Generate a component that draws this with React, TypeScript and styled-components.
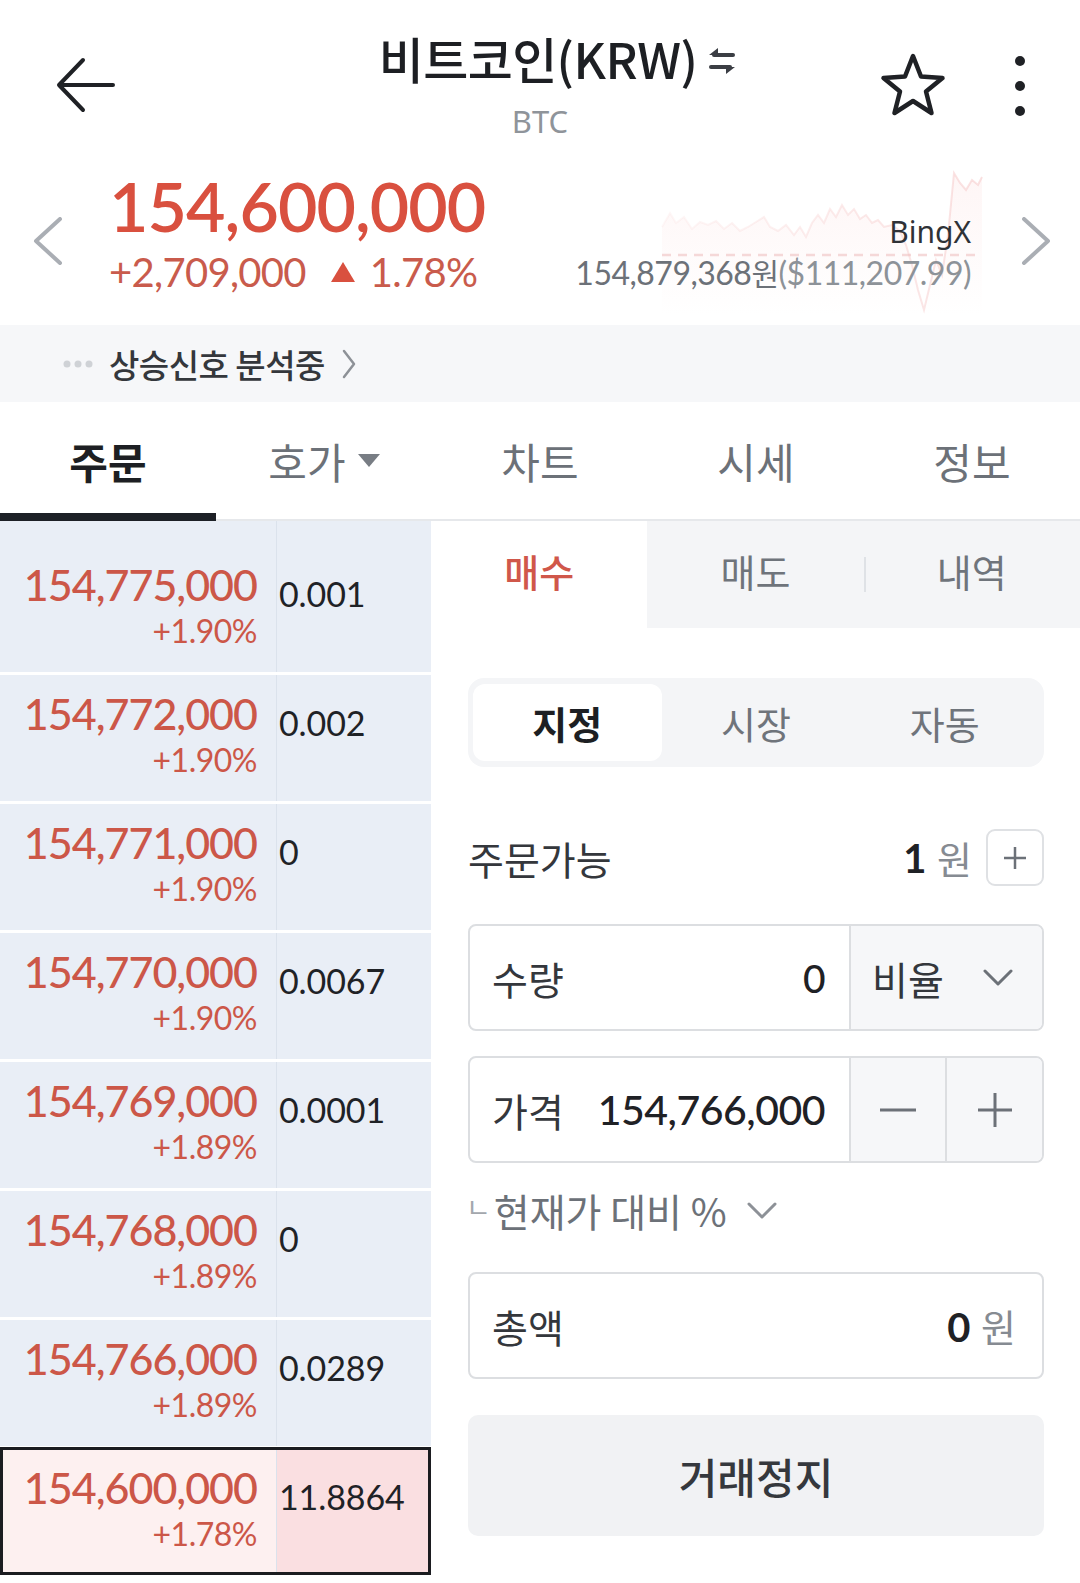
import React from 'react';
import styled, { createGlobalStyle } from 'styled-components';

const Global = createGlobalStyle`
  html, body { margin: 0; padding: 0; background: #fff; }
  body { font-family: "Noto Sans CJK KR", "Noto Sans", sans-serif; }
  * { box-sizing: border-box; }
`;

const NUM = `"Lato", "Noto Sans CJK KR", sans-serif`;
const KR = `"Noto Sans CJK KR", "Noto Sans", sans-serif`;

const Page = styled.div`
  width: 1080px;
  height: 1583px;
  overflow: hidden;
  background: #fff;
`;

/* ---------- header ---------- */
const Header = styled.header`
  height: 160px;
  display: grid;
  grid-template-columns: 1fr auto 1fr;
`;
const HeaderLeft = styled.div`
  padding: 57px 0 0 55px;
`;
const TitleBlock = styled.div`
  display: flex;
  flex-direction: column;
  align-items: center;
  padding-top: 27px;
`;
const TitleRow = styled.div`
  display: flex;
  align-items: center;
  gap: 10px;
  margin-left: 36px;
`;
const Title = styled.h1`
  margin: 0;
  font-family: ${KR};
  font-size: 49px;
  line-height: 62px;
  font-weight: 500;
  color: #1d1f23;
  letter-spacing: -0.6px;
`;
const Ticker = styled.div`
  font-family: "Noto Sans", sans-serif;
  font-size: 31px;
  line-height: 36px;
  color: #8f949a;
  margin-top: 14px;
`;
const HeaderRight = styled.div`
  display: flex;
  justify-content: flex-end;
  align-items: flex-start;
  padding: 52px 55px 0 0;
  gap: 68px;
`;
const Kebab = styled.div`
  display: flex;
  flex-direction: column;
  gap: 15px;
  margin-top: 4px;
  & > span {
    width: 10px;
    height: 10px;
    border-radius: 50%;
    background: #1f2125;
  }
`;

/* ---------- price ---------- */
const PriceSection = styled.section`
  position: relative;
  height: 165px;
  display: flex;
  align-items: flex-start;
`;
const NavBtn = styled.div<{ $pad: number }>`
  width: 109px;
  align-self: center;
  display: flex;
  padding-left: ${(p) => p.$pad}px;
  margin-top: -4px;
`;
const PriceBlock = styled.div`
  padding-top: 12px;
  position: relative;
  z-index: 1;
`;
const BigPrice = styled.div`
  font-family: ${NUM};
  font-size: 68px;
  line-height: 68px;
  font-weight: 600;
  letter-spacing: -0.9px;
  color: #d9503f;
`;
const ChangeLine = styled.div`
  margin-top: 12px;
  display: flex;
  align-items: center;
  font-family: ${NUM};
  font-size: 40px;
  line-height: 40px;
  letter-spacing: -0.7px;
  color: #c95b4c;
  & svg { margin: 0 14px 0 24px; }
`;
const RefBlock = styled.div`
  margin-left: auto;
  padding-top: 54px;
  text-align: right;
  position: relative;
  z-index: 1;
`;
const Exchange = styled.div`
  font-family: "Noto Sans", sans-serif;
  font-size: 30px;
  line-height: 36px;
  color: #2f3237;
`;
const RefPrice = styled.div`
  margin-top: 4px;
  font-family: ${NUM};
  font-size: 32px;
  line-height: 36px;
  letter-spacing: -0.5px;
  color: #6c7178;
  & span { color: #8d9298; }
  & i { font-style: normal; font-family: ${KR}; font-size: 30px; }
`;
const Spark = styled.svg`
  position: absolute;
  left: 658px;
  top: 5px;
  pointer-events: none;
`;

/* ---------- signal bar ---------- */
const SignalBar = styled.div`
  height: 77px;
  background: #f6f7f9;
  display: flex;
  align-items: center;
  padding-left: 63px;
`;
const SignalText = styled.span`
  font-family: ${KR};
  font-size: 33px;
  font-weight: 500;
  color: #34373c;
  margin: 0 16px 0 16px;
  letter-spacing: -0.5px;
`;

/* ---------- tabs ---------- */
const TabBar = styled.nav`
  height: 119px;
  display: grid;
  grid-template-columns: repeat(5, 1fr);
  border-bottom: 2px solid #e6e8eb;
`;
const Tab = styled.div<{ $active?: boolean }>`
  position: relative;
  display: flex;
  align-items: center;
  justify-content: center;
  gap: 12px;
  font-family: ${KR};
  font-size: 42px;
  font-weight: ${(p) => (p.$active ? 700 : 400)};
  color: ${(p) => (p.$active ? '#1d1f23' : '#6c7178')};
  &::after {
    content: '';
    display: ${(p) => (p.$active ? 'block' : 'none')};
    position: absolute;
    left: 0;
    right: 0;
    bottom: -2px;
    height: 8px;
    background: #1d2026;
  }
`;

/* ---------- main ---------- */
const Main = styled.div`
  display: grid;
  grid-template-columns: 431px 1fr;
  align-items: start;
`;
const Book = styled.div`
  display: flex;
  flex-direction: column;
  gap: 3px;
  background: #fff;
`;
const BookRow = styled.div<{ $h?: number; $hl?: boolean }>`
  position: relative;
  height: ${(p) => p.$h ?? 126}px;
  display: grid;
  grid-template-columns: 276px 1fr;
  ${(p) =>
    p.$hl
      ? `&::after { content: ''; position: absolute; inset: -2px 0 0 0; border: 3px solid #1b1c20; pointer-events: none; }`
      : ''}
`;
const PriceCell = styled.div<{ $hl?: boolean }>`
  background: ${(p) => (p.$hl ? '#fdf0f0' : '#e9eef6')};
  text-align: right;
  padding: 17px 19px 0 0;
`;
const QtyCell = styled.div<{ $hl?: boolean }>`
  background: ${(p) => (p.$hl ? '#fadfe1' : '#e9eef6')};
  border-left: 1px solid #dbe2ec;
  padding: 31px 0 0 2px;
  font-family: ${NUM};
  font-size: 34px;
  line-height: 34px;
  letter-spacing: -0.1px;
  color: #1f2226;
`;
const BookPrice = styled.div`
  font-family: ${NUM};
  font-size: 43px;
  line-height: 43px;
  font-weight: 500;
  letter-spacing: -1px;
  color: #cc5748;
`;
const BookPct = styled.div`
  margin-top: 9px;
  font-family: ${NUM};
  font-size: 32px;
  line-height: 32px;
  letter-spacing: -0.5px;
  color: #cc5748;
`;

/* ---------- order panel ---------- */
const Panel = styled.div`
  display: flex;
  flex-direction: column;
`;
const SideTabs = styled.div`
  height: 107px;
  display: grid;
  grid-template-columns: repeat(3, 1fr);
  background: #f4f5f7;
`;
const SideTab = styled.div<{ $active?: boolean; $sep?: boolean }>`
  position: relative;
  display: flex;
  align-items: center;
  justify-content: center;
  font-family: ${KR};
  font-size: 38px;
  font-weight: ${(p) => (p.$active ? 500 : 400)};
  color: ${(p) => (p.$active ? '#d0574a' : '#6f747b')};
  background: ${(p) => (p.$active ? '#fff' : 'transparent')};
  padding-bottom: 8px;
  &::before {
    content: '';
    display: ${(p) => (p.$sep ? 'block' : 'none')};
    position: absolute;
    left: 0;
    top: 36px;
    width: 2px;
    height: 35px;
    background: #dfe2e6;
  }
`;
const Form = styled.div`
  padding: 0 36px 0 37px;
  display: flex;
  flex-direction: column;
`;
const Segment = styled.div`
  margin-top: 50px;
  height: 89px;
  background: #f4f5f7;
  border-radius: 16px;
  padding: 6px 5px;
  display: grid;
  grid-template-columns: repeat(3, 1fr);
`;
const SegItem = styled.div<{ $active?: boolean }>`
  display: flex;
  align-items: center;
  justify-content: center;
  border-radius: 12px;
  background: ${(p) => (p.$active ? '#fff' : 'transparent')};
  font-family: ${KR};
  font-size: 38px;
  font-weight: ${(p) => (p.$active ? 700 : 400)};
  color: ${(p) => (p.$active ? '#1d1f23' : '#6f747b')};
`;
const AvailRow = styled.div`
  margin-top: 62px;
  height: 57px;
  display: flex;
  align-items: center;
`;
const Spacer = styled.span`
  flex: 1;
`;
const Label = styled.span<{ $color?: string }>`
  font-family: ${KR};
  font-size: 39px;
  color: ${(p) => p.$color ?? '#34373c'};
  white-space: nowrap;
`;
const Amount = styled.span<{ $bold?: boolean; $size?: number }>`
  font-family: ${NUM};
  font-size: ${(p) => p.$size ?? 39}px;
  font-weight: ${(p) => (p.$bold ? 700 : 500)};
  color: #1f2125;
  letter-spacing: -0.5px;
`;
const Won = styled.span`
  font-family: ${KR};
  font-size: 38px;
  color: #868b92;
  margin-left: 11px;
`;
const PlusBox = styled.div`
  margin-left: 14px;
  width: 58px;
  height: 57px;
  border: 2px solid #dfe1e4;
  border-radius: 9px;
  display: flex;
  align-items: center;
  justify-content: center;
`;
const InputBox = styled.div<{ $mt: number }>`
  margin-top: ${(p) => p.$mt}px;
  height: 107px;
  border: 2px solid #dcdee1;
  border-radius: 8px;
  display: flex;
  overflow: hidden;
`;
const Field = styled.div<{ $pr?: number }>`
  flex: 1;
  display: flex;
  align-items: center;
  justify-content: space-between;
  padding: 0 ${(p) => p.$pr ?? 24}px 0 22px;
`;
const SideBox = styled.div<{ $w: number }>`
  width: ${(p) => p.$w}px;
  background: #f6f7f9;
  border-left: 2px solid #dcdee1;
  display: flex;
  align-items: center;
  justify-content: center;
`;
const RatioBox = styled(SideBox)`
  justify-content: space-between;
  padding: 0 29px 0 21px;
`;
const CompareRow = styled.div`
  margin-top: 16px;
  height: 62px;
  display: flex;
  align-items: center;
  gap: 0;
  & > svg { margin-left: 20px; }
`;
const Corner = styled.span`
  font-family: ${KR};
  font-size: 27px;
  color: #a3a7ad;
  margin: -8px 3px 0 -2px;
`;
const HaltButton = styled.div`
  margin-top: 36px;
  height: 121px;
  border-radius: 10px;
  background: #f1f2f4;
  display: flex;
  align-items: center;
  justify-content: center;
  font-family: ${KR};
  font-size: 42px;
  font-weight: 500;
  color: #35383d;
`;

/* ---------- icons ---------- */
const BackIcon = () => (
  <svg width="60" height="56" viewBox="0 0 60 56" fill="none">
    <path d="M58 28H4M28 3L4 28L28 53" stroke="#1f2125" strokeWidth="4" strokeLinecap="round" strokeLinejoin="round" />
  </svg>
);
const SwapIcon = () => (
  <svg width="30" height="32" viewBox="0 0 30 32" fill="none" style={{ marginTop: 6 }}>
    <path d="M26 10H7" stroke="#3b3e44" strokeWidth="4" strokeLinecap="round" />
    <path d="M2 10L11 3V10Z" fill="#3b3e44" />
    <path d="M4 22H23" stroke="#3b3e44" strokeWidth="4" strokeLinecap="round" />
    <path d="M28 22L19 29V22Z" fill="#3b3e44" />
  </svg>
);
const StarIcon = () => (
  <svg width="68" height="66" viewBox="0 0 68 66" fill="none">
    <path
      d="M34 4L42 24.5L63.5 26L47 39.5L52.5 61L34 49L15.5 61L21 39.5L4.5 26L26 24.5Z"
      stroke="#1f2125"
      strokeWidth="4.5"
      strokeLinejoin="round"
    />
  </svg>
);
const Chevron = ({ dir, color = '#aaaeb4', w = 30, h = 48, sw = 4 }: { dir: 'l' | 'r'; color?: string; w?: number; h?: number; sw?: number }) => (
  <svg width={w} height={h} viewBox={`0 0 ${w} ${h}`} fill="none">
    <path
      d={dir === 'l' ? `M${w - 3} 2L3 ${h / 2}L${w - 3} ${h - 2}` : `M3 2L${w - 3} ${h / 2}L3 ${h - 2}`}
      stroke={color}
      strokeWidth={sw}
      strokeLinecap="round"
      strokeLinejoin="round"
    />
  </svg>
);
const DownChevron = ({ w = 30, h = 17, color = '#6c7178', sw = 3 }: { w?: number; h?: number; color?: string; sw?: number }) => (
  <svg width={w} height={h} viewBox={`0 0 ${w} ${h}`} fill="none">
    <path d={`M2 2L${w / 2} ${h - 2}L${w - 2} 2`} stroke={color} strokeWidth={sw} strokeLinecap="round" strokeLinejoin="round" />
  </svg>
);
const Plus = ({ s = 36, color = '#6c7178', sw = 3 }: { s?: number; color?: string; sw?: number }) => (
  <svg width={s} height={s} viewBox={`0 0 ${s} ${s}`} fill="none">
    <path d={`M${s / 2} 1V${s - 1}M1 ${s / 2}H${s - 1}`} stroke={color} strokeWidth={sw} />
  </svg>
);
const Minus = () => (
  <svg width="36" height="4" viewBox="0 0 36 4" fill="none">
    <path d="M0 2H36" stroke="#6c7178" strokeWidth="3" />
  </svg>
);

const sparkPts: [number, number][] = [
  [4, 62], [12, 48], [18, 58], [26, 52], [34, 64], [42, 57], [50, 60], [58, 56], [66, 64], [74, 58],
  [82, 66], [90, 62], [98, 57], [106, 52], [112, 62], [120, 66], [128, 60], [136, 70], [142, 62],
  [148, 72], [154, 58], [160, 50], [166, 58], [172, 44], [178, 52], [184, 40], [190, 50], [196, 44],
  [202, 54], [208, 50], [214, 58], [220, 55], [226, 62], [234, 60], [242, 66], [248, 80], [254, 100],
  [260, 125], [266, 145], [272, 120], [278, 95], [284, 110], [290, 70], [296, 8], [302, 18], [308, 25],
  [314, 15], [320, 20], [324, 12],
];

const Sparkline = () => {
  const line = sparkPts.map(([x, y], i) => `${i ? 'L' : 'M'}${x} ${y}`).join(' ');
  const area = `${line} L324 150 L4 150 Z`;
  return (
    <Spark width="326" height="150" viewBox="0 0 326 150">
      <defs>
        <linearGradient id="fadeX" x1="0" y1="0" x2="1" y2="0">
          <stop offset="0" stopColor="#f3b9b9" stopOpacity="0.1" />
          <stop offset="1" stopColor="#f3b9b9" stopOpacity="0.42" />
        </linearGradient>
        <linearGradient id="fillY" x1="0" y1="0" x2="0" y2="1">
          <stop offset="0" stopColor="#fdecec" stopOpacity="0.5" />
          <stop offset="1" stopColor="#fdecec" stopOpacity="0" />
        </linearGradient>
      </defs>
      <path d={area} fill="url(#fillY)" />
      <path d="M4 90H324" stroke="#f2caca" strokeWidth="2.5" strokeDasharray="9 7" opacity="0.7" />
      <path d={line} fill="none" stroke="url(#fadeX)" strokeWidth="2" />
    </Spark>
  );
};

const rows = [
  { p: '154,775,000', pct: '+1.90%', q: '0.001' },
  { p: '154,772,000', pct: '+1.90%', q: '0.002' },
  { p: '154,771,000', pct: '+1.90%', q: '0' },
  { p: '154,770,000', pct: '+1.90%', q: '0.0067' },
  { p: '154,769,000', pct: '+1.89%', q: '0.0001' },
  { p: '154,768,000', pct: '+1.89%', q: '0' },
  { p: '154,766,000', pct: '+1.89%', q: '0.0289' },
];

export default function App() {
  return (
    <Page>
      <Global />
      <Header>
        <HeaderLeft>
          <BackIcon />
        </HeaderLeft>
        <TitleBlock>
          <TitleRow>
            <Title>비트코인(KRW)</Title>
            <SwapIcon />
          </TitleRow>
          <Ticker>BTC</Ticker>
        </TitleBlock>
        <HeaderRight>
          <StarIcon />
          <Kebab>
            <span />
            <span />
            <span />
          </Kebab>
        </HeaderRight>
      </Header>

      <PriceSection>
        <Sparkline />
        <NavBtn $pad={33}>
          <Chevron dir="l" />
        </NavBtn>
        <PriceBlock>
          <BigPrice>154,600,000</BigPrice>
          <ChangeLine>
            +2,709,000
            <svg width="26" height="22" viewBox="0 0 26 22">
              <path d="M13 1L25 21H1Z" fill="#d9503f" />
            </svg>
            1.78%
          </ChangeLine>
        </PriceBlock>
        <RefBlock>
          <Exchange>BingX</Exchange>
          <RefPrice>
            154,879,368<i>원</i>
            <span>($111,207.99)</span>
          </RefPrice>
        </RefBlock>
        <NavBtn $pad={50}>
          <Chevron dir="r" />
        </NavBtn>
      </PriceSection>

      <SignalBar>
        <svg width="30" height="8" viewBox="0 0 30 8">
          <circle cx="4" cy="4" r="3.5" fill="#cfd2d6" />
          <circle cx="15" cy="4" r="3.5" fill="#cfd2d6" />
          <circle cx="26" cy="4" r="3.5" fill="#cfd2d6" />
        </svg>
        <SignalText>상승신호 분석중</SignalText>
        <Chevron dir="r" color="#8d9197" w={16} h={30} sw={2.5} />
      </SignalBar>

      <TabBar>
        <Tab $active>주문</Tab>
        <Tab>
          호가
          <svg width="22" height="13" viewBox="0 0 22 13">
            <path d="M0 0H22L11 13Z" fill="#787d84" />
          </svg>
        </Tab>
        <Tab>차트</Tab>
        <Tab>시세</Tab>
        <Tab>정보</Tab>
      </TabBar>

      <Main>
        <Book>
          <BookRow $h={22}>
            <PriceCell />
            <QtyCell />
          </BookRow>
          {rows.map((r, i) => (
            <BookRow key={i}>
              <PriceCell>
                <BookPrice>{r.p}</BookPrice>
                <BookPct>{r.pct}</BookPct>
              </PriceCell>
              <QtyCell>{r.q}</QtyCell>
            </BookRow>
          ))}
          <BookRow $hl>
            <PriceCell $hl>
              <BookPrice>154,600,000</BookPrice>
              <BookPct>+1.78%</BookPct>
            </PriceCell>
            <QtyCell $hl>11.8864</QtyCell>
          </BookRow>
        </Book>

        <Panel>
          <SideTabs>
            <SideTab $active>매수</SideTab>
            <SideTab>매도</SideTab>
            <SideTab $sep>내역</SideTab>
          </SideTabs>
          <Form>
            <Segment>
              <SegItem $active>지정</SegItem>
              <SegItem>시장</SegItem>
              <SegItem>자동</SegItem>
            </Segment>

            <AvailRow>
              <Label>주문가능</Label>
              <Spacer />
              <Amount $bold $size={40}>1</Amount>
              <Won>원</Won>
              <PlusBox>
                <Plus s={24} sw={2.5} />
              </PlusBox>
            </AvailRow>

            <InputBox $mt={38}>
              <Field $pr={24}>
                <Label>수량</Label>
                <Amount>0</Amount>
              </Field>
              <RatioBox $w={193}>
                <Label>비율</Label>
                <DownChevron />
              </RatioBox>
            </InputBox>

            <InputBox $mt={25}>
              <Field $pr={24}>
                <Label>가격</Label>
                <Amount $size={41}>154,766,000</Amount>
              </Field>
              <SideBox $w={96}>
                <Minus />
              </SideBox>
              <SideBox $w={97}>
                <Plus />
              </SideBox>
            </InputBox>

            <CompareRow>
              <Corner>ㄴ</Corner>
              <Label $color="#6c7178">현재가 대비 %</Label>
              <DownChevron w={30} h={17} color="#8d9197" />
            </CompareRow>

            <InputBox $mt={31}>
              <Field $pr={26}>
                <Label>총액</Label>
                <span>
                  <Amount $bold $size={40}>0</Amount>
                  <Won>원</Won>
                </span>
              </Field>
            </InputBox>

            <HaltButton>거래정지</HaltButton>
          </Form>
        </Panel>
      </Main>
    </Page>
  );
}
